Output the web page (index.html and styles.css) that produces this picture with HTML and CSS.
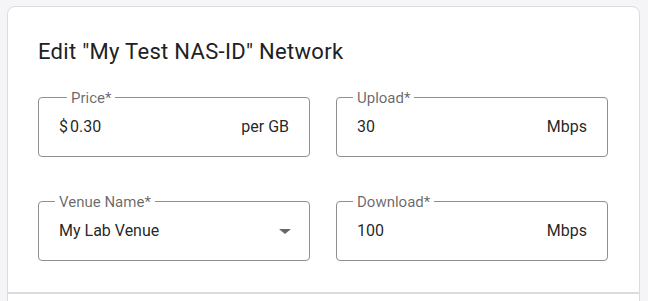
FILE: index.html
```html
<!DOCTYPE html>
<html>
<head>
<meta charset="utf-8">
<link rel="stylesheet" href="styles.css">
</head>
<body>
<div class="card">
  <div class="content">
    <h2 class="title">Edit "My Test NAS-ID" Network</h2>
    <div class="grid">
      <div class="field">
        <span class="label label-prefixed">Price*</span>
        <span class="value"><span class="prefix">$</span>0.30</span>
        <span class="suffix">per GB</span>
      </div>
      <div class="field">
        <span class="label">Upload*</span>
        <span class="value">30</span>
        <span class="suffix">Mbps</span>
      </div>
      <div class="field field-select">
        <span class="label">Venue Name*</span>
        <span class="value">My Lab Venue</span>
        <span class="arrow"></span>
      </div>
      <div class="field">
        <span class="label">Download*</span>
        <span class="value">100</span>
        <span class="suffix">Mbps</span>
      </div>
    </div>
  </div>
  <div class="divider"></div>
  <div class="actions"></div>
</div>
</body>
</html>
```

FILE: styles.css
```css
* { box-sizing: border-box; }
html, body { margin: 0; padding: 0; }
body {
  background: #f5f5f7;
  font-family: Roboto, "Liberation Sans", Arial, sans-serif;
  color: rgba(0, 0, 0, 0.87);
  overflow: hidden;
}
.card {
  margin: 6px 0 0 7px;
  width: 633px;
  background: #fff;
  border: 1px solid #dadce0;
  border-radius: 8px;
}
.content {
  padding: 33px 31px 31px 30px;
}
.title {
  margin: 0;
  font-size: 22px;
  line-height: 24px;
  letter-spacing: 0.3px;
  font-weight: 400;
  color: #202124;
}
.grid {
  margin-top: 33px;
  display: grid;
  grid-template-columns: 272px 272px;
  grid-auto-rows: 60px;
  column-gap: 26px;
  row-gap: 44px;
}
.field {
  position: relative;
  display: flex;
  align-items: center;
  justify-content: space-between;
  border: 1px solid #8f8f8f;
  border-radius: 4px;
  padding: 0 20px;
  font-size: 16px;
  line-height: 20px;
}
.field-select { padding-right: 18px; }
.label {
  position: absolute;
  top: -8.5px;
  left: 16px;
  padding: 0 4px;
  background: #fff;
  font-size: 15px;
  line-height: 16px;
  color: rgba(0, 0, 0, 0.6);
  white-space: nowrap;
}
.label-prefixed { left: 28px; }
.prefix { margin-right: 2px; }
.arrow {
  width: 0;
  height: 0;
  border-left: 6px solid transparent;
  border-right: 6px solid transparent;
  border-top: 5px solid rgba(0, 0, 0, 0.6);
}
.divider {
  height: 2px;
  background: #dcdce0;
}
.actions { height: 40px; }
```
